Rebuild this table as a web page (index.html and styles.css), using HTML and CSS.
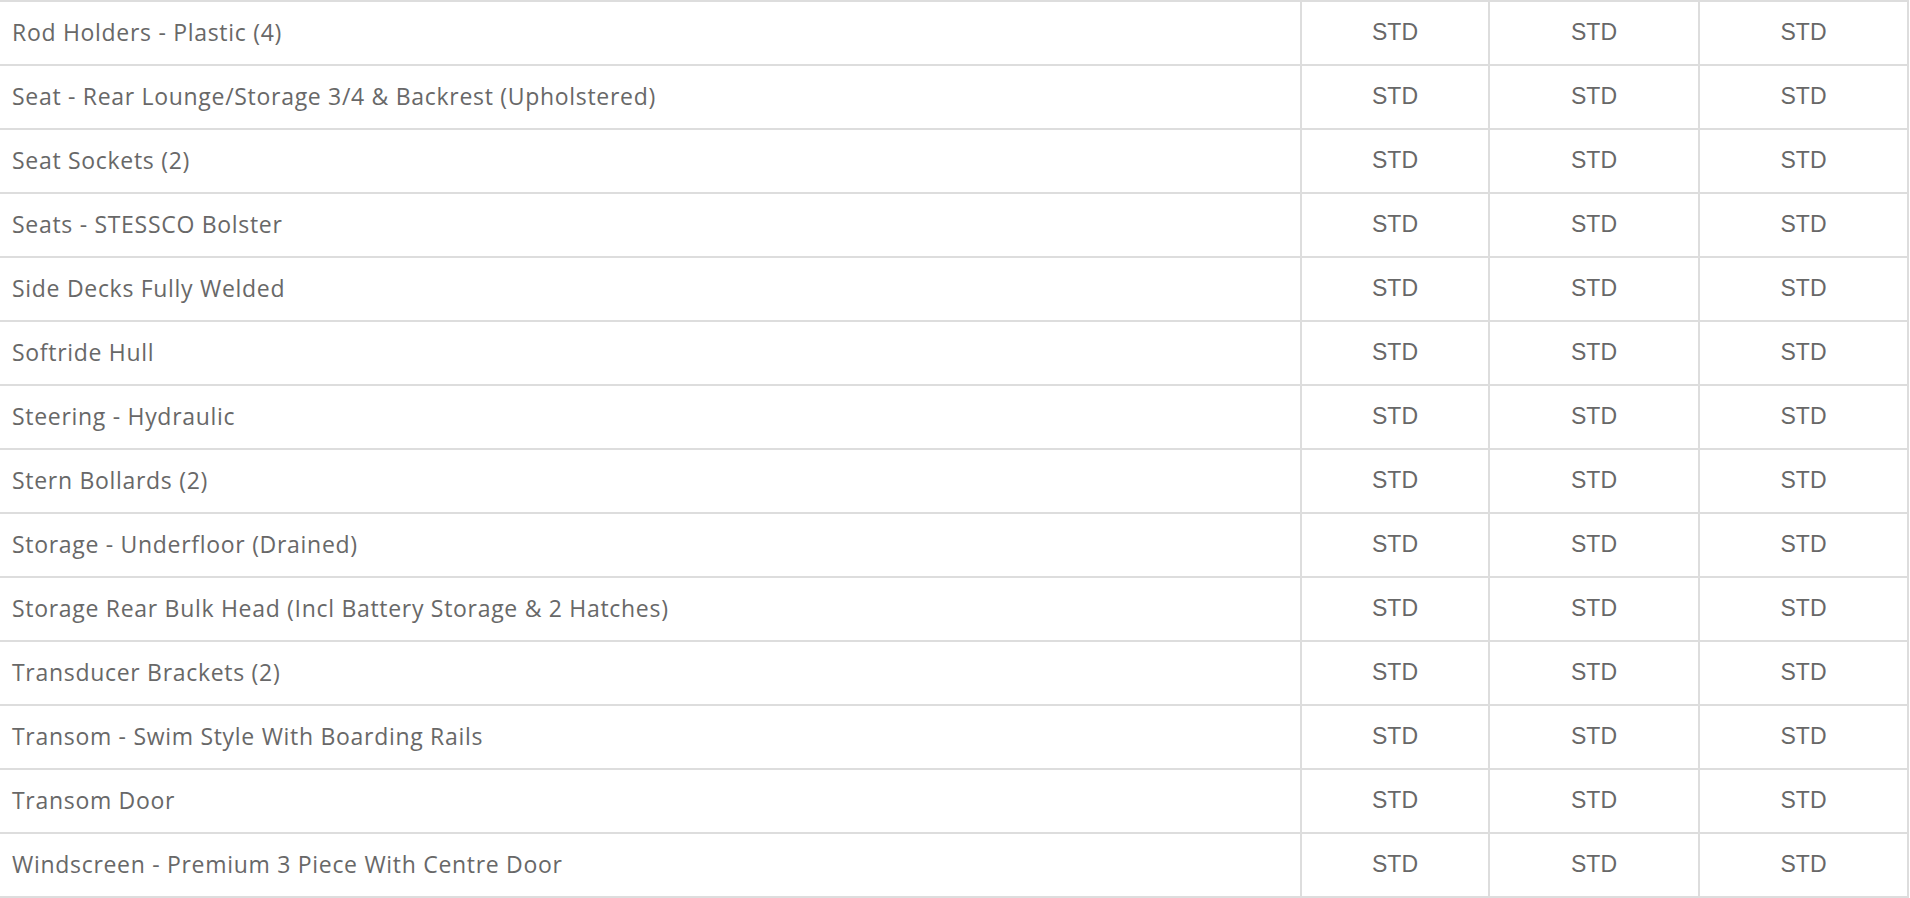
FILE: index.html
```html
<!DOCTYPE html>
<html lang="en">
<head>
<meta charset="utf-8">
<title>Specifications</title>
<link rel="stylesheet" href="styles.css">
</head>
<body>
<div class="spec-table">
  <div class="row"><div class="cell name">Rod Holders - Plastic (4)</div><div class="cell val">STD</div><div class="cell val">STD</div><div class="cell val">STD</div></div>
  <div class="row"><div class="cell name">Seat - Rear Lounge/Storage 3/4 &amp; Backrest (Upholstered)</div><div class="cell val">STD</div><div class="cell val">STD</div><div class="cell val">STD</div></div>
  <div class="row"><div class="cell name">Seat Sockets (2)</div><div class="cell val">STD</div><div class="cell val">STD</div><div class="cell val">STD</div></div>
  <div class="row"><div class="cell name">Seats - STESSCO Bolster</div><div class="cell val">STD</div><div class="cell val">STD</div><div class="cell val">STD</div></div>
  <div class="row"><div class="cell name">Side Decks Fully Welded</div><div class="cell val">STD</div><div class="cell val">STD</div><div class="cell val">STD</div></div>
  <div class="row"><div class="cell name">Softride Hull</div><div class="cell val">STD</div><div class="cell val">STD</div><div class="cell val">STD</div></div>
  <div class="row"><div class="cell name">Steering - Hydraulic</div><div class="cell val">STD</div><div class="cell val">STD</div><div class="cell val">STD</div></div>
  <div class="row"><div class="cell name">Stern Bollards (2)</div><div class="cell val">STD</div><div class="cell val">STD</div><div class="cell val">STD</div></div>
  <div class="row"><div class="cell name">Storage - Underfloor (Drained)</div><div class="cell val">STD</div><div class="cell val">STD</div><div class="cell val">STD</div></div>
  <div class="row"><div class="cell name">Storage Rear Bulk Head (Incl Battery Storage &amp; 2 Hatches)</div><div class="cell val">STD</div><div class="cell val">STD</div><div class="cell val">STD</div></div>
  <div class="row"><div class="cell name">Transducer Brackets (2)</div><div class="cell val">STD</div><div class="cell val">STD</div><div class="cell val">STD</div></div>
  <div class="row"><div class="cell name">Transom - Swim Style With Boarding Rails</div><div class="cell val">STD</div><div class="cell val">STD</div><div class="cell val">STD</div></div>
  <div class="row"><div class="cell name">Transom Door</div><div class="cell val">STD</div><div class="cell val">STD</div><div class="cell val">STD</div></div>
  <div class="row"><div class="cell name">Windscreen - Premium 3 Piece With Centre Door</div><div class="cell val">STD</div><div class="cell val">STD</div><div class="cell val">STD</div></div>
</div>
</body>
</html>
```

FILE: styles.css
```css
html, body {
  margin: 0;
  padding: 0;
  background: #ffffff;
}

.spec-table {
  width: 1909px;
  border-bottom: 2px solid #dddddd;
}

.row {
  display: grid;
  grid-template-columns: 1302px 188px 210px 209px;
  height: 64px;
}

.cell {
  box-sizing: border-box;
  border-top: 2px solid #dddddd;
  border-right: 2px solid #dddddd;
  display: flex;
  align-items: center;
  color: #686868;
}

.name {
  padding-left: 12px;
  font-family: "Open Sans", "Noto Sans", sans-serif;
  font-size: 23px;
  letter-spacing: 0.7px;
  padding-bottom: 3px;
}

.val {
  justify-content: center;
  font-family: "Liberation Sans", Arial, sans-serif;
  font-size: 23px;
  padding-bottom: 1px;
}
```
